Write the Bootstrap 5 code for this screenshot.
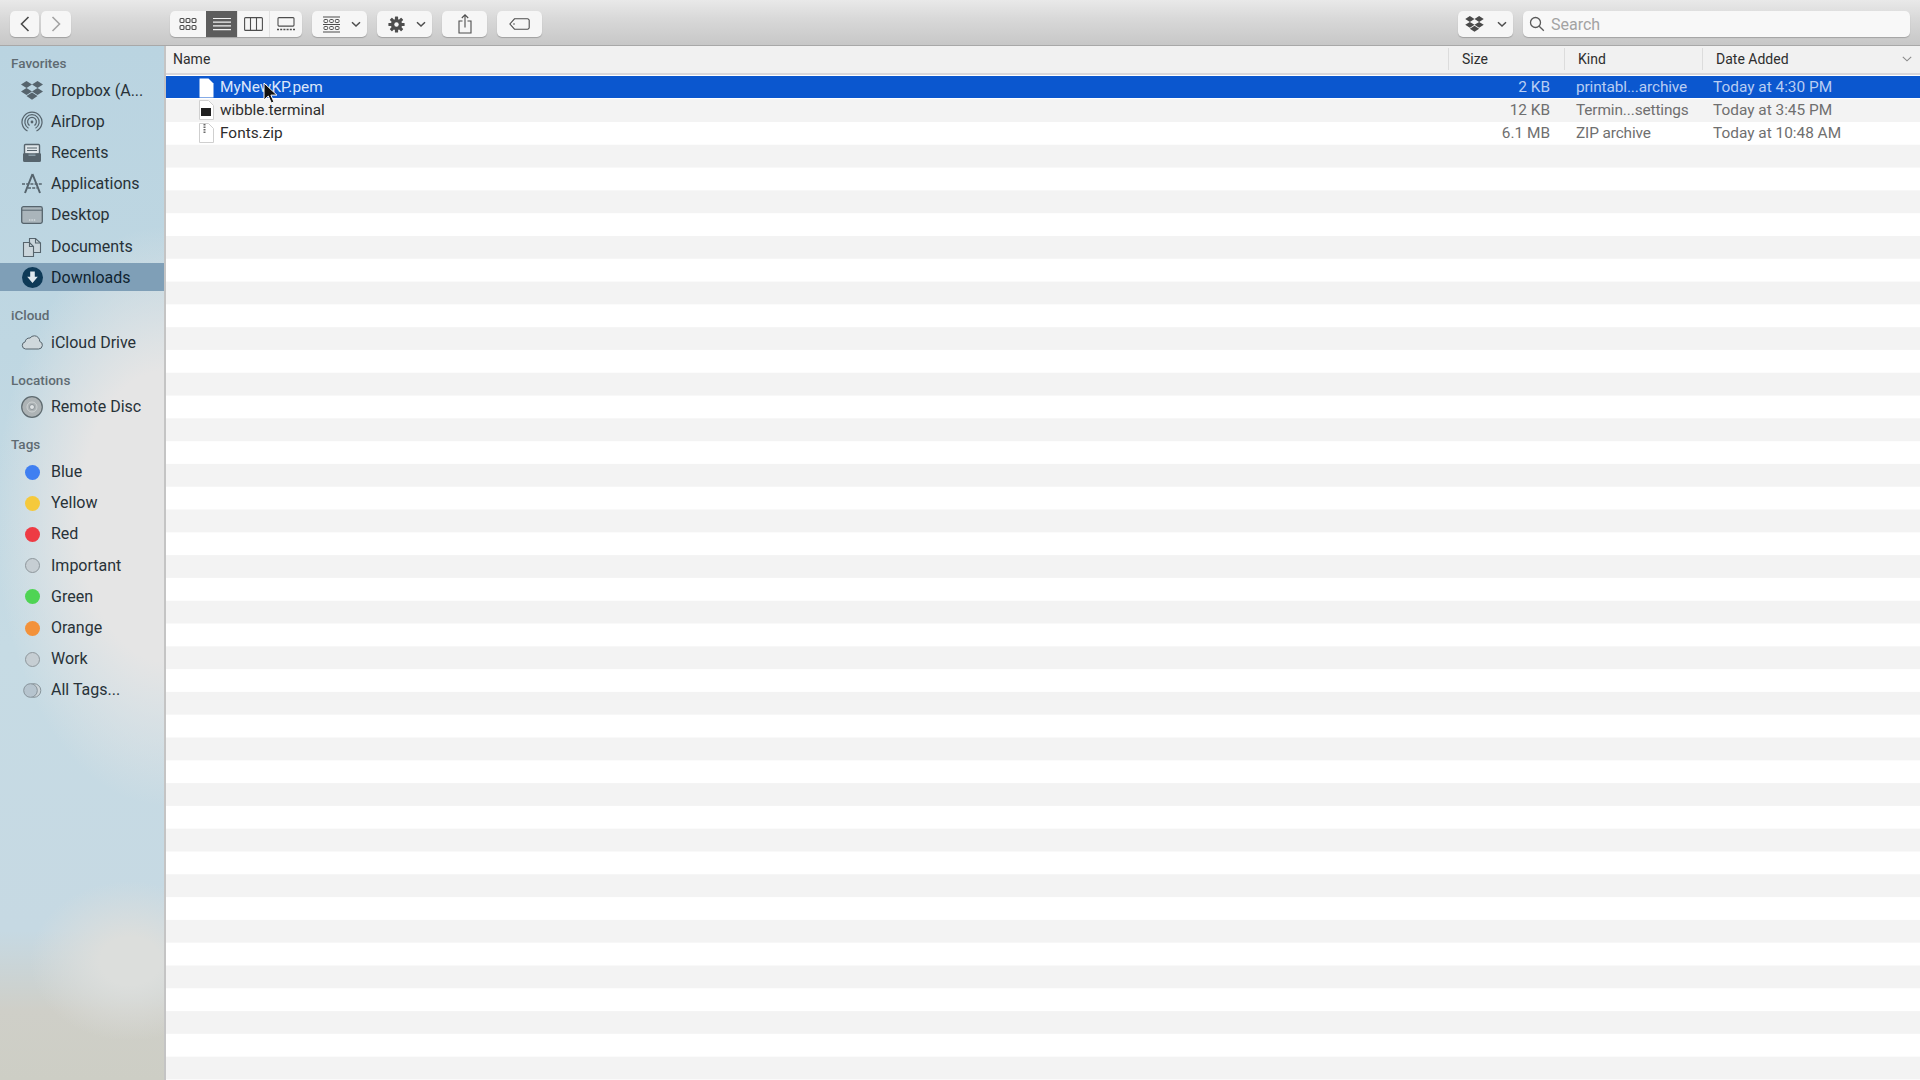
<!DOCTYPE html>
<html lang="en">
<head>
    <meta charset="UTF-8">
    <meta name="viewport" content="width=device-width, initial-scale=1.0">
    <title>Downloads</title>
    <link href="https://cdn.jsdelivr.net/npm/bootstrap@5.3.3/dist/css/bootstrap.min.css" rel="stylesheet">
    <style>
        html, body { height: 100%; overflow: hidden; }
        body { font-family: Roboto, "Liberation Sans", sans-serif; background: #fff; }

        /* toolbar */
        .finder-bar { height: 46px; padding: 11px 10px 0 10px; background: linear-gradient(#e9e9e9, #d9d9d9 40%, #c7c7c7); border-bottom: 1px solid #a8a8a8; }
        .tb-btn { height: 26px; padding: 0; border: 0; border-radius: 5px; background: #f6f6f6; box-shadow: 0 1px 1px rgba(0,0,0,.22); display: flex; align-items: center; justify-content: center; }
        .tb-btn:hover { background: #f6f6f6; }
        .tb-back { width: 29px; }
        .tb-fwd { width: 30px; margin-left: 2px; }
        .tb-seg { display: flex; height: 26px; margin-left: 99px; border-radius: 5px; background: #f6f6f6; box-shadow: 0 1px 1px rgba(0,0,0,.22); overflow: hidden; }
        .tb-seg > div { display: flex; align-items: center; justify-content: center; height: 26px; border-left: 1px solid #e2e2e2; }
        .tb-seg > div:first-child { border-left: 0; }
        .tb-seg > .seg-on { background: #5d5d5d; border-left: 0; }
        .seg-a { width: 36px; }
        .seg-b { width: 31px; }
        .seg-c { width: 32px; }
        .seg-d { width: 33px; }
        .tb-menu { width: 55px; margin-left: 10px; justify-content: flex-start; padding-left: 11px; gap: 11px; }
        .tb-plain { width: 45px; margin-left: 10px; }
        .tb-drop { width: 55px; justify-content: flex-start; padding-left: 7px; gap: 13px; }
        .search-wrap { width: 387px; height: 26px; margin-left: 10px; }
        .search-input { height: 26px; padding: 0 0 0 28px; border: 0; border-radius: 5px; background: #f8f8f8; box-shadow: 0 1px 1px rgba(0,0,0,.2); font-size: 16px; }
        .search-input::placeholder { color: #a3a3a3; }
        .search-glass { position: absolute; left: 6px; top: 5px; }

        /* sidebar */
        .finder-side { width: 166px; height: 1034px; flex: none; border-right: 2px solid #c4c4c4; padding-top: 6px;
            background:
                radial-gradient(ellipse 100px 80px at 130px 915px, #dcdedc 30%, rgba(220,222,220,0) 100%),
                linear-gradient(to bottom, rgba(206,206,198,0) 0, rgba(206,206,198,0) 885px, #cfcfc8 965px, #cdcec5 100%),
                radial-gradient(ellipse 170px 290px at 165px 470px, #e5e5e5 50%, rgba(229,229,229,0) 100%),
                linear-gradient(to bottom, #bad4e1 0, #bfd7e2 300px, #c6dbe4 600px, #c6d9e3 880px); }
        .side-label { height: 22px; line-height: 22px; margin: 13.2px 0 1.6px; padding-left: 11px; font-size: 13.5px; font-weight: 500; color: #5f6b72; }
        .side-label:first-child { margin-top: 0; }
        .side-item { display: flex; align-items: center; height: 28px; margin-bottom: 3.2px; padding: 2px 0 0 19px; font-size: 16px; color: #283238; white-space: nowrap; }
        .side-item.side-on { background: #7f9fb7; color: #0f2430; }
        .side-ico { width: 26px; height: 24px; margin-right: 6px; flex: none; display: flex; align-items: center; justify-content: center; }
        .tag-dot { width: 15px; height: 15px; border-radius: 50%; }
        .tag-blue { background: #3f7ff1; }
        .tag-yellow { background: #f5c93c; }
        .tag-red { background: #ee3b44; }
        .tag-green { background: #4fd454; }
        .tag-orange { background: #f3923a; }
        .tag-gray { background: #c6ced3; border: 1px solid #8e979c; }

        /* file list */
        .finder-main { flex: 1; min-width: 0; }
        .list-head { height: 29px; padding-bottom: 1px; display: flex; align-items: center; background: #f1f1f1; border-bottom: 2px solid #d9d7da; font-size: 14px; color: #2e2e2e; }
        .list-head > div { height: 22px; line-height: 22px; border-left: 1px solid #dcdcdc; padding-left: 13px; }
        .list-head > .cell-name { border-left: 0; padding-left: 7px; }
        .cell-name { flex: 1; min-width: 0; }
        .cell-size { width: 116px; flex: none; }
        .cell-kind { width: 138px; flex: none; }
        .cell-date { width: 218px; flex: none; }
        .list-body { position: relative; height: 1005px; background: linear-gradient(to bottom, #fff 0, #fff 22.8px, #f3f3f3 22.8px, #f3f3f3 45.6px) 0 .4px / 100% 45.6px; }
        .file-row { display: flex; align-items: center; height: 22.8px; padding-top: 2.5px; font-size: 15.4px; color: #6f6f6f; }
        .file-row .cell-name { display: flex; align-items: center; padding-left: 32px; color: #2d2d2d; }
        .file-row .cell-size { text-align: right; padding-right: 14px; }
        .file-row .cell-kind { padding-left: 12px; letter-spacing: -.12px; }
        .file-row .cell-date { padding-left: 11px; }
        .file-ico { width: 16px; height: 20px; margin-right: 6px; flex: none; }
        .file-row.row-sel { height: 21.6px; margin-top: 1.2px; padding-top: 2px; background: #0b57cf; color: #b8cdf3; }
        .file-row.row-sel .cell-name { color: #dbe6fa; }
        .mouse-arrow { position: absolute; left: 97px; top: 6px; }
    </style>
</head>
<body>
    <div class="finder-bar d-flex">
        <button class="btn tb-btn tb-back" aria-label="Back">
            <svg width="12" height="18" viewBox="0 0 12 18"><path d="M9.5 2 2.5 9l7 7" fill="none" stroke="#4a4a4a" stroke-width="1.6"/></svg>
        </button>
        <button class="btn tb-btn tb-fwd" aria-label="Forward">
            <svg width="12" height="18" viewBox="0 0 12 18"><path d="M2.5 2 9.5 9l-7 7" fill="none" stroke="#a3a3a3" stroke-width="1.6"/></svg>
        </button>

        <div class="tb-seg">
            <div class="seg-a">
                <svg width="18" height="14" viewBox="0 0 18 14" fill="none" stroke="#4d4d4d" stroke-width="1.1"><rect x="1" y="1.5" width="4" height="4" rx="1"/><rect x="7" y="1.5" width="4" height="4" rx="1"/><rect x="13" y="1.5" width="4" height="4" rx="1"/><rect x="1" y="8.5" width="4" height="4" rx="1"/><rect x="7" y="8.5" width="4" height="4" rx="1"/><rect x="13" y="8.5" width="4" height="4" rx="1"/></svg>
            </div>
            <div class="seg-b seg-on">
                <svg width="18" height="14" viewBox="0 0 18 14" stroke="#f2f2f2" stroke-width="1.2"><path d="M0 1.5h18M0 5.2h18M0 8.9h18M0 12.6h18"/></svg>
            </div>
            <div class="seg-c">
                <svg width="19" height="14" viewBox="0 0 19 14" fill="none" stroke="#4d4d4d" stroke-width="1.1"><rect x=".6" y=".6" width="17.8" height="12.8" rx="1"/><path d="M6.5 .6v12.8M12.5 .6v12.8"/></svg>
            </div>
            <div class="seg-d">
                <svg width="18" height="14" viewBox="0 0 18 14" fill="none" stroke="#4d4d4d" stroke-width="1.1"><rect x="1" y=".6" width="16" height="8.5" rx="1"/><path d="M0 12.5h18" stroke-width="1.6" stroke-dasharray="2 1.2"/></svg>
            </div>
        </div>

        <button class="btn tb-btn tb-menu" aria-label="Group">
            <svg width="17" height="17" viewBox="0 0 17 17" fill="none" stroke="#4d4d4d" stroke-width="1"><path d="M0 1h17M0 8.5h17M0 16h17"/><rect x="1" y="3.5" width="3.6" height="3" rx=".8"/><rect x="6.7" y="3.5" width="3.6" height="3" rx=".8"/><rect x="12.4" y="3.5" width="3.6" height="3" rx=".8"/><rect x="1" y="10.5" width="3.6" height="3" rx=".8"/><rect x="6.7" y="10.5" width="3.6" height="3" rx=".8"/><rect x="12.4" y="10.5" width="3.6" height="3" rx=".8"/></svg>
            <svg width="10" height="7" viewBox="0 0 10 7"><path d="M1 1.2 5 5l4-3.8" fill="none" stroke="#4d4d4d" stroke-width="1.5"/></svg>
        </button>
        <button class="btn tb-btn tb-menu" aria-label="Action">
            <svg width="17" height="17" viewBox="0 0 17 17"><g fill="#4d4d4d"><circle cx="8.5" cy="8.5" r="5.6"/><rect x="6.9" y=".4" width="3.2" height="16.2" rx=".6"/><rect x="6.9" y=".4" width="3.2" height="16.2" rx=".6" transform="rotate(45 8.5 8.5)"/><rect x="6.9" y=".4" width="3.2" height="16.2" rx=".6" transform="rotate(90 8.5 8.5)"/><rect x="6.9" y=".4" width="3.2" height="16.2" rx=".6" transform="rotate(135 8.5 8.5)"/></g><circle cx="8.5" cy="8.5" r="2.2" fill="#f6f6f6"/></svg>
            <svg width="10" height="7" viewBox="0 0 10 7"><path d="M1 1.2 5 5l4-3.8" fill="none" stroke="#4d4d4d" stroke-width="1.5"/></svg>
        </button>
        <button class="btn tb-btn tb-plain" aria-label="Share">
            <svg width="14" height="20" viewBox="0 0 14 20" fill="none" stroke="#4d4d4d" stroke-width="1.1"><path d="M4.5 7H1v12h12V7H9.5"/><path d="M7 13.5V1M3.8 4 7 .8 10.2 4"/></svg>
        </button>
        <button class="btn tb-btn tb-plain" aria-label="Tag">
            <svg width="21" height="12" viewBox="0 0 21 12" fill="none" stroke="#4d4d4d" stroke-width="1.1"><path d="M5.5 .8H18.5a1.7 1.7 0 0 1 1.7 1.7v7a1.7 1.7 0 0 1-1.7 1.7H5.5L.9 6z"/><circle cx="5" cy="6" r=".8" fill="#4d4d4d" stroke="none"/></svg>
        </button>

        <button class="btn tb-btn tb-drop ms-auto" aria-label="Dropbox">
            <svg width="19" height="16" viewBox="0 0 22 19" fill="#4a4a4a"><path d="M5.5 0 0 3.5 5.5 7 11 3.5zM16.5 0 11 3.5 16.5 7 22 3.5zM0 10.5 5.5 14 11 10.5 5.5 7zM16.5 7 11 10.5 16.5 14 22 10.5zM5.5 15 11 18.7 16.5 15 11 11.6z"/></svg>
            <svg width="10" height="7" viewBox="0 0 10 7"><path d="M1 1.2 5 5l4-3.8" fill="none" stroke="#4d4d4d" stroke-width="1.5"/></svg>
        </button>
        <div class="search-wrap position-relative">
            <input type="text" class="form-control search-input" placeholder="Search">
            <svg class="search-glass" width="16" height="16" viewBox="0 0 16 16" fill="none" stroke="#5a5a5a" stroke-width="1.3"><circle cx="6.5" cy="6.5" r="5"/><path d="m10.2 10.2 4.6 4.6"/></svg>
        </div>
    </div>

    <div class="d-flex">
        <div class="finder-side">
            <div class="side-label">Favorites</div>
            <div class="side-item"><span class="side-ico">
                <svg width="22" height="19" viewBox="0 0 22 19" fill="#56646d"><path d="M5.5 0 0 3.5 5.5 7 11 3.5zM16.5 0 11 3.5 16.5 7 22 3.5zM0 10.5 5.5 14 11 10.5 5.5 7zM16.5 7 11 10.5 16.5 14 22 10.5zM5.5 15 11 18.7 16.5 15 11 11.6z"/></svg>
            </span>Dropbox (A...</div>
            <div class="side-item"><span class="side-ico">
                <svg width="22" height="22" viewBox="0 0 22 22" fill="none" stroke="#56646d" stroke-width="1.2"><path d="M6.5 20A10 10 0 1 1 15.5 20"/><path d="M7.5 17.2A7.2 7.2 0 1 1 14.5 17.2"/><path d="M8.6 14.5A4.4 4.4 0 1 1 13.4 14.5"/><circle cx="11" cy="11" r="1.4" fill="#56646d" stroke="none"/></svg>
            </span>AirDrop</div>
            <div class="side-item"><span class="side-ico">
                <svg width="20" height="20" viewBox="0 0 20 20"><path d="M3.5 1.5h13a1 1 0 0 1 1 1V11h-15V2.5a1 1 0 0 1 1-1z" fill="#dfe6ea" stroke="#56646d" stroke-width="1.4"/><path d="M5 5h10M5 7.5h10" stroke="#56646d" stroke-width="1.2"/><path d="M1 10.5h5.5v2h7v-2H19v7a1.5 1.5 0 0 1-1.5 1.5h-15A1.5 1.5 0 0 1 1 17.5z" fill="#56646d"/></svg>
            </span>Recents</div>
            <div class="side-item"><span class="side-ico">
                <svg width="23" height="22" viewBox="0 0 23 22" fill="none" stroke="#56646d"><path d="M11.5 1 4 20M11.5 1 19 20" stroke-width="2"/><path d="M1 11h21M7 15h9" stroke-width="1.3" stroke-dasharray="3 1.2"/></svg>
            </span>Applications</div>
            <div class="side-item"><span class="side-ico">
                <svg width="22" height="18" viewBox="0 0 22 18"><rect x=".7" y=".7" width="20.6" height="16.6" rx="1.8" fill="#aab5bb" stroke="#56646d" stroke-width="1.3"/><path d="M1 4.2h20" stroke="#56646d"/><path d="M8 14h1.4M10.4 14h1.4M12.8 14h1.4" stroke="#e8eef0" stroke-width="1.2"/></svg>
            </span>Desktop</div>
            <div class="side-item"><span class="side-ico">
                <svg width="20" height="20" viewBox="0 0 20 20" fill="#cbd6dc" stroke="#56646d" stroke-width="1.1"><path d="M7.5 1.5h6l5 4.5v9.5h-11z"/><path d="M13.5 1.5V6h5" fill="none"/><path d="M1.5 5.5h6l4 4v10h-10z"/><path d="M7.5 5.5v4h4" fill="none"/></svg>
            </span>Documents</div>
            <div class="side-item side-on"><span class="side-ico">
                <svg width="21" height="21" viewBox="0 0 21 21"><circle cx="10.5" cy="10.5" r="10.5" fill="#0e3a57"/><path d="M8.2 4.5h4.6v5.2h3L10.5 16 5.2 9.7h3z" fill="#dfe8ee"/></svg>
            </span>Downloads</div>

            <div class="side-label">iCloud</div>
            <div class="side-item"><span class="side-ico">
                <svg width="22" height="15" viewBox="0 0 22 15"><path d="M4.6 14a3.6 3.6 0 0 1-.5-7.1A4.8 4.8 0 0 1 9 3a5.6 5.6 0 0 1 4.5-2.2 5.4 5.4 0 0 1 5.2 5.6A3.9 3.9 0 0 1 17.6 14z" fill="#cfd8dc" stroke="#56646d" stroke-width="1"/></svg>
            </span>iCloud Drive</div>

            <div class="side-label">Locations</div>
            <div class="side-item"><span class="side-ico">
                <svg width="22" height="22" viewBox="0 0 22 22" fill="none"><circle cx="11" cy="11" r="10.3" fill="#adb3b5" stroke="#5f6b70" stroke-width="1.2"/><circle cx="11" cy="11" r="5" stroke="#cdd2d3" stroke-width="1"/><circle cx="11" cy="11" r="2.5" fill="#dfe3e4" stroke="#7d878b" stroke-width=".8"/></svg>
            </span>Remote Disc</div>

            <div class="side-label">Tags</div>
            <div class="side-item"><span class="side-ico"><span class="tag-dot tag-blue"></span></span>Blue</div>
            <div class="side-item"><span class="side-ico"><span class="tag-dot tag-yellow"></span></span>Yellow</div>
            <div class="side-item"><span class="side-ico"><span class="tag-dot tag-red"></span></span>Red</div>
            <div class="side-item"><span class="side-ico"><span class="tag-dot tag-gray"></span></span>Important</div>
            <div class="side-item"><span class="side-ico"><span class="tag-dot tag-green"></span></span>Green</div>
            <div class="side-item"><span class="side-ico"><span class="tag-dot tag-orange"></span></span>Orange</div>
            <div class="side-item"><span class="side-ico"><span class="tag-dot tag-gray"></span></span>Work</div>
            <div class="side-item"><span class="side-ico">
                <svg width="19" height="15" viewBox="0 0 19 15" stroke="#87939a"><circle cx="11" cy="7.5" r="6.8" fill="#cdd5d9"/><circle cx="7.5" cy="7.5" r="6.8" fill="#b6c4ce"/></svg>
            </span>All Tags...</div>
        </div>

        <div class="finder-main">
            <div class="list-head">
                <div class="cell-name">Name</div>
                <div class="cell-size">Size</div>
                <div class="cell-kind">Kind</div>
                <div class="cell-date d-flex justify-content-between align-items-center pe-2">Date Added
                    <svg width="10" height="6" viewBox="0 0 10 6"><path d="M.8 .8 5 4.8 9.2 .8" fill="none" stroke="#8a8a8a" stroke-width="1.1"/></svg>
                </div>
            </div>
            <div class="list-body">
                <div class="file-row row-sel">
                    <div class="cell-name">
                        <svg class="file-ico" viewBox="0 0 16 20"><path d="M1.5 .5h9l5 5v14h-14z" fill="#fff"/></svg>MyNewKP.pem
                    </div>
                    <div class="cell-size">2 KB</div>
                    <div class="cell-kind">printabl...archive</div>
                    <div class="cell-date">Today at 4:30 PM</div>
                </div>
                <div class="file-row">
                    <div class="cell-name">
                        <svg class="file-ico" viewBox="0 0 16 20"><path d="M1.5 .5h9l5 5v14h-14z" fill="#fff" stroke="#d0d0d0"/><rect x="3" y="8" width="10" height="8" fill="#1f1f1f"/></svg>wibble.terminal
                    </div>
                    <div class="cell-size">12 KB</div>
                    <div class="cell-kind">Termin...settings</div>
                    <div class="cell-date">Today at 3:45 PM</div>
                </div>
                <div class="file-row">
                    <div class="cell-name">
                        <svg class="file-ico" viewBox="0 0 16 20"><path d="M1.5 .5h9l5 5v14h-14z" fill="#fff" stroke="#cfcfcf"/><path d="M6.5 1v9" stroke="#6a6a6a" stroke-width="2" stroke-dasharray="1.5 1"/></svg>Fonts.zip
                    </div>
                    <div class="cell-size">6.1 MB</div>
                    <div class="cell-kind">ZIP archive</div>
                    <div class="cell-date">Today at 10:48 AM</div>
                </div>
                <svg class="mouse-arrow" width="16" height="24" viewBox="0 0 16 24"><path d="M1 1v17l4.3-4 3 7 2.6-1.1-3-6.8h6z" fill="#111" stroke="#fff" stroke-width="1"/></svg>
            </div>
        </div>
    </div>
</body>
</html>
